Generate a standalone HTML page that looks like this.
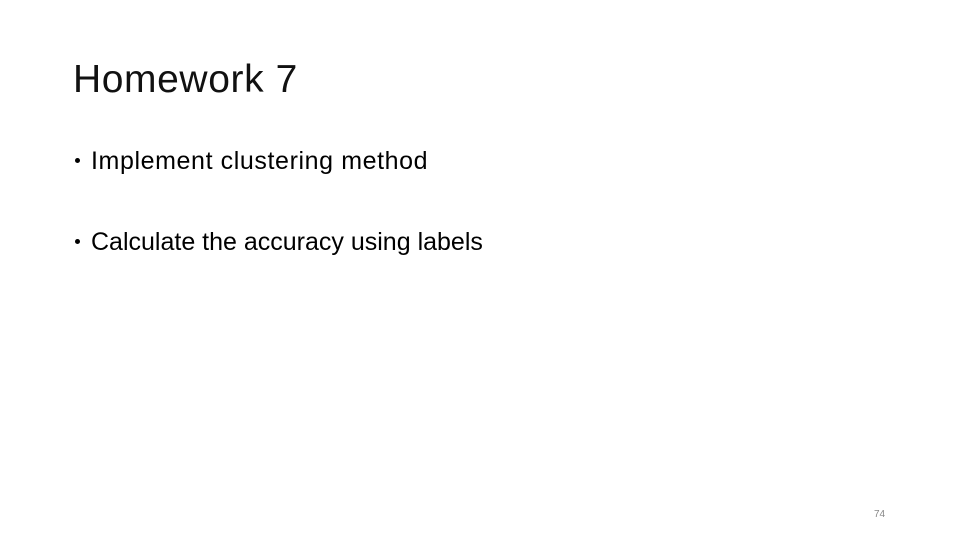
<!DOCTYPE html>
<html><head><style>
body{margin:0;width:960px;height:540px;background:#fff;position:relative;overflow:hidden;font-family:"Liberation Sans",sans-serif;color:#000}
.t{position:absolute;left:73px;top:60px;font-size:39px;line-height:39px;letter-spacing:0.6px;color:#111;white-space:nowrap}
.b{position:absolute;left:91px;font-size:25px;line-height:25px;white-space:nowrap}
.d{position:absolute;left:75px;width:5px;height:5px;border-radius:50%;background:#000}
.n{position:absolute;left:874px;top:509px;font-size:10px;color:#888}
</style></head><body>
<div class="t">Homework 7</div>
<div class="d" style="top:158px"></div>
<div class="b" style="top:149px;letter-spacing:0.6px">Implement clustering method</div>
<div class="d" style="top:239px"></div>
<div class="b" style="top:230px;letter-spacing:0">Calculate the accuracy using labels</div>
<div class="n">74</div>
</body></html>
